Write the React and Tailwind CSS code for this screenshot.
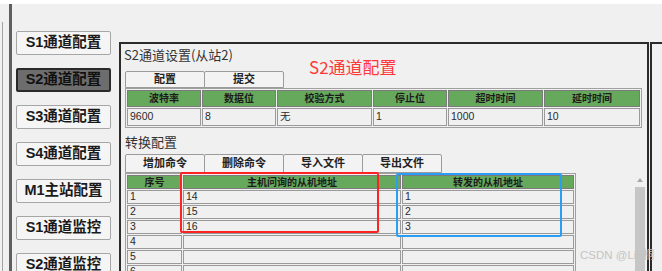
import React from 'react';

// ── Data ────────────────────────────────────────────────────────────────────
const navItems = ['S1通道配置', 'S2通道配置', 'S3通道配置', 'S4通道配置', 'M1主站配置', 'S1通道监控', 'S2通道监控'];

const serialHeads = ['波特率', '数据位', '校验方式', '停止位', '超时时间', '延时时间'];
const serialVals = ['9600', '8', '无', '1', '1000', '10'];

const mapRows = [
  ['1', '14', '1'],
  ['2', '15', '2'],
  ['3', '16', '3'],
  ['4', '', ''],
  ['5', '', ''],
  ['6', '', ''],
];

const FONT = { fontFamily: '"Liberation Sans", "Noto Sans CJK SC", sans-serif' };
const CJK = { fontFamily: '"Noto Sans CJK SC", "Liberation Sans", sans-serif' };

const Tab = ({ label }) => (
  <div className="w-[80px] flex items-center justify-center border border-[#9b9b9b] rounded-t-[2px] bg-[#f3f3f3] text-[11px] font-bold text-[#222] -mr-[1px]">
    {label}
  </div>
);

const HeadCell = ({ children, h }) => (
  <div className={`${h} flex items-center justify-center bg-[#66a85c] border border-[#7b7b7b] text-[10px] font-bold text-[#1c1c1c]`}>
    {children}
  </div>
);

const DataCell = ({ children, h }) => (
  <div className={`${h} flex items-center pl-[2px] bg-[#f0f0f0] border border-[#9a9a9a] text-[10.5px] text-[#2a2a2a]`}>
    {children}
  </div>
);

export default function App() {
  return (
    <div className="relative w-[662px] h-[271px] overflow-hidden bg-[#f0f0f0] flex flex-col" style={FONT}>
      {/* top strip */}
      <div className="h-[4px] bg-white flex-none" />

      <div className="flex flex-1 min-h-0">
        {/* left gutter */}
        <div className="w-[9px] flex-none flex flex-col pt-[18px] pl-[2px]">
          <div className="w-[1px] flex-1 bg-[#a3a3a3]" />
        </div>
        <div className="w-[3px] flex-none bg-[#5f5f5f]" />

        {/* nav buttons */}
        <div className="w-[107px] flex-none flex flex-col gap-[13px] pl-[4px] pt-[27px]">
          {navItems.map((t, i) => (
            <div
              key={t}
              className={`w-[95px] h-[24px] flex-none flex items-center justify-center rounded-[2px] text-[14.5px] font-bold ${
                i === 1 ? 'bg-[#6d6d6d] border-2 border-[#2a2a2a] text-[#111]' : 'bg-[#f5f5f5] border border-[#a6a6a6] text-[#1a1a1a]'
              }`}
            >
              {t}
            </div>
          ))}
        </div>

        {/* main panel */}
        <div className="w-[530px] flex-none mt-[38px] border-2 border-b-0 border-[#2b2b2b] flex flex-col">
          <div className="mt-[1px] h-[20px] pl-[3px] text-[13px] leading-[20px] text-[#333]" style={CJK}>
            S2通道设置(从站2)
          </div>

          <div className="mt-[6px] h-[17px] pl-[4px] flex">
            <Tab label="配置" />
            <Tab label="提交" />
          </div>

          <div className="ml-[4px] w-fit border border-[#a0a0a0] p-[1px] grid grid-cols-[74px_74px_95px_74px_95px_96px] gap-[1px]">
            {serialHeads.map((h) => (
              <HeadCell key={h} h="h-[17px]">{h}</HeadCell>
            ))}
            {serialVals.map((v, i) => (
              <DataCell key={i} h="h-[18px]">{v}</DataCell>
            ))}
          </div>

          <div className="mt-[4px] h-[20px] pl-[4px] text-[13px] leading-[20px] text-[#333]" style={CJK}>
            转换配置
          </div>

          <div className="mt-[2px] h-[19px] pl-[4px] flex">
            <Tab label="增加命令" />
            <Tab label="删除命令" />
            <Tab label="导入文件" />
            <Tab label="导出文件" />
          </div>

          <div className="flex flex-1 min-h-0">
            <div className="ml-[4px] w-fit self-start border border-[#a0a0a0] p-[1px] grid grid-cols-[55px_218px_172px] gap-[1px]">
              <HeadCell h="h-[14px]">序号</HeadCell>
              <HeadCell h="h-[14px]">主机问询的从机地址</HeadCell>
              <HeadCell h="h-[14px]">转发的从机地址</HeadCell>
              {mapRows.map((r) =>
                r.map((c, j) => (
                  <DataCell key={r[0] + '-' + j} h="h-[14px]">{c}</DataCell>
                ))
              )}
            </div>

            {/* scrollbar */}
            <div className="ml-auto mr-[2px] w-[10px] flex flex-col items-center pt-[5px]">
              <svg width="6" height="4" viewBox="0 0 6 4">
                <path d="M0 4 L3 0 L6 4 Z" fill="#a8a8a8" />
              </svg>
              <div className="mt-[5px] w-[10px] flex-1 bg-[#c6c6c6]" />
            </div>
          </div>
        </div>

        {/* next panel edge */}
        <div className="flex-1 ml-[1px] mt-[38px] border-l-2 border-t-2 border-[#2b2b2b]" />
      </div>

      {/* annotations */}
      <div className="absolute left-[309px] top-[57px] text-[17px] leading-[20px] text-[#ff3838]" style={CJK}>
        S2通道配置
      </div>
      <div className="absolute left-[180px] top-[172px] w-[199px] h-[61px] border-2 border-[#ff2222] rounded-[2px]" />
      <div className="absolute left-[396px] top-[173px] w-[166px] h-[64px] border-2 border-[#2a9df4] rounded-[2px]" />
      <div className="absolute left-[580px] top-[247px] text-[11.5px] leading-[16px] text-[#c4c4c4]">
        CSDN @Lin桐
      </div>
    </div>
  );
}
